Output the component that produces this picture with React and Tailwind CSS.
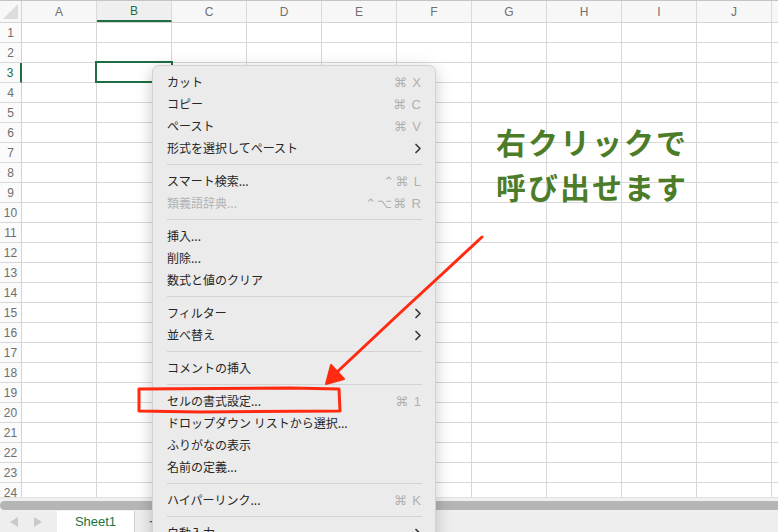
import React from 'react'

const COLS = ['A', 'B', 'C', 'D', 'E', 'F', 'G', 'H', 'I', 'J', 'K']
const ROWS = Array.from({ length: 24 }, (_, i) => i + 1)

// menu model: null = separator
const MENU = [
  { label: 'カット', key: '⌘ X' },
  { label: 'コピー', key: '⌘ C' },
  { label: 'ペースト', key: '⌘ V' },
  { label: '形式を選択してペースト', sub: true },
  null,
  { label: 'スマート検索...', key: '⌃⌘ L' },
  { label: '類義語辞典...', key: '⌃⌥⌘ R', disabled: true },
  null,
  { label: '挿入...' },
  { label: '削除...' },
  { label: '数式と値のクリア' },
  null,
  { label: 'フィルター', sub: true },
  { label: '並べ替え', sub: true },
  null,
  { label: 'コメントの挿入' },
  null,
  { label: 'セルの書式設定...', key: '⌘ 1' },
  { label: 'ドロップダウン リストから選択...' },
  { label: 'ふりがなの表示' },
  { label: '名前の定義...' },
  null,
  { label: 'ハイパーリンク...', key: '⌘ K' },
  null,
  { label: '自動入力', sub: true },
]

const jp = { fontFamily: '"Noto Sans CJK JP", "Noto Sans", sans-serif' }
const latin = { fontFamily: '"Liberation Sans", "DejaVu Sans", sans-serif' }

function Chevron() {
  return (
    <svg width="8" height="11" viewBox="0 0 8 11" className="shrink-0">
      <path d="M2 1.5 L6 5.5 L2 9.5" fill="none" stroke="#3a3a3a" strokeWidth="1.7" strokeLinecap="round" strokeLinejoin="round" />
    </svg>
  )
}

function ContextMenu() {
  return (
    <div
      className="absolute left-[152px] top-[65px] w-[284px] rounded-[7px] bg-[#ebebeb] border border-[#d2d2d2] pt-[5px] pb-[5px] shadow-[0_4px_16px_rgba(0,0,0,0.22)]"
      style={jp}
    >
      {MENU.map((m, i) =>
        m === null ? (
          <div key={i} className="h-[11px] flex items-center pl-[14px] pr-[13px]">
            <div className="h-px w-full bg-[#d3d3d3]" />
          </div>
        ) : (
          <div key={i} className="h-[22px] flex items-center justify-between pl-[14px] pr-[13px] text-[12px] leading-none">
            <span className={m.disabled ? 'text-[#b3b3b3]' : 'text-[#262626]'}>{m.label}</span>
            {m.key && (
              <span className="text-[13px] text-[#b0b0b0] tracking-[1px]" style={latin}>{m.key}</span>
            )}
            {m.sub && <Chevron />}
          </div>
        )
      )}
    </div>
  )
}

function Sheet() {
  return (
    <div className="h-[497px] overflow-hidden bg-white" style={latin}>
      {/* column headers */}
      <div className="flex h-[23px] border-t border-b border-t-[#c4c4c4] border-b-[#d4d4d4] bg-[#f7f7f7]">
        <div className="w-[22px] shrink-0 border-r border-[#d4d4d4] flex items-end justify-end p-[3px]">
          <svg width="15" height="15" viewBox="0 0 15 15">
            <polygon points="15,0 15,15 0,15" fill="#dcdcdc" />
          </svg>
        </div>
        {COLS.map((c) => (
          <div
            key={c}
            className={
              'w-[75px] shrink-0 border-r border-[#dadada] flex items-center justify-center text-[12px] ' +
              (c === 'B' ? 'text-[#1f6e43] border-b-2 border-b-[#1f6e43] bg-[#efefef]' : 'text-[#707070]')
            }
          >
            {c}
          </div>
        ))}
      </div>
      {ROWS.map((r) => (
        <div key={r} className="flex h-[20px]">
          <div
            className={
              'w-[22px] shrink-0 border-b border-[#d8d8d8] flex items-center justify-center text-[12px] bg-[#fbfbfb] ' +
              (r === 3 ? 'text-[#1f6e43] border-r-2 border-r-[#1f6e43]' : 'text-[#6e6e6e] border-r border-r-[#d4d4d4]')
            }
          >
            {r}
          </div>
          {COLS.map((c) => (
            <div key={c} className="relative w-[75px] shrink-0 border-r border-b border-[#d8d8d8]">
              {r === 3 && c === 'B' && (
                <div className="absolute -left-[2px] -top-[2px] w-[78px] h-[22px] border-2 border-[#1f6e43]" />
              )}
            </div>
          ))}
        </div>
      ))}
    </div>
  )
}

function Footer() {
  return (
    <div style={latin}>
      <div className="h-[14px] bg-[#f0f0f0] border-t border-[#e2e2e2] pt-[3px]">
        <div className="h-[9px] bg-[#b5b5b5] rounded-l-[5px]" />
      </div>
      <div className="h-[21px] bg-[#eeeeee] flex items-center">
        <div className="w-[57px] flex items-center gap-[16px] pl-[10px]">
          <svg width="8" height="10" viewBox="0 0 8 10"><polygon points="8,0 8,10 0,5" fill="#c9c9c9" /></svg>
          <svg width="8" height="10" viewBox="0 0 8 10"><polygon points="0,0 0,10 8,5" fill="#c9c9c9" /></svg>
        </div>
        <div className="w-[78px] h-full bg-white border-r border-[#d0d0d0] flex items-center justify-center text-[13px] text-[#217346]">
          Sheet1
        </div>
        <div className="ml-[14px] text-[16px] text-[#555] leading-none">+</div>
      </div>
    </div>
  )
}

function Annotations() {
  return (
    <svg className="absolute left-0 top-0 pointer-events-none" width="778" height="532" viewBox="0 0 778 532">
      <g stroke="#ff2a10" fill="none" strokeLinecap="round" strokeLinejoin="round">
        <path d="M482 237 L440 276 L401 312 L368 343 L336 373" strokeWidth="3" />
        <path d="M139 389 L290 388 L339 389 L340 411 L200 412 L139 411 Z" strokeWidth="3" />
      </g>
      <polygon points="326,384 331,365 344,379" fill="#ff2a10" stroke="#ff2a10" strokeWidth="2" strokeLinejoin="round" />
    </svg>
  )
}

export default function App() {
  return (
    <div className="relative w-[778px] h-[532px] overflow-hidden bg-white">
      <Sheet />
      <Footer />
      <div
        className="absolute left-[496px] top-[119px] text-[30px] font-bold leading-[45px] tracking-[2px] text-[#4d7c28]"
        style={jp}
      >
        <div>右クリックで</div>
        <div>呼び出せます</div>
      </div>
      <ContextMenu />
      <Annotations />
    </div>
  )
}
